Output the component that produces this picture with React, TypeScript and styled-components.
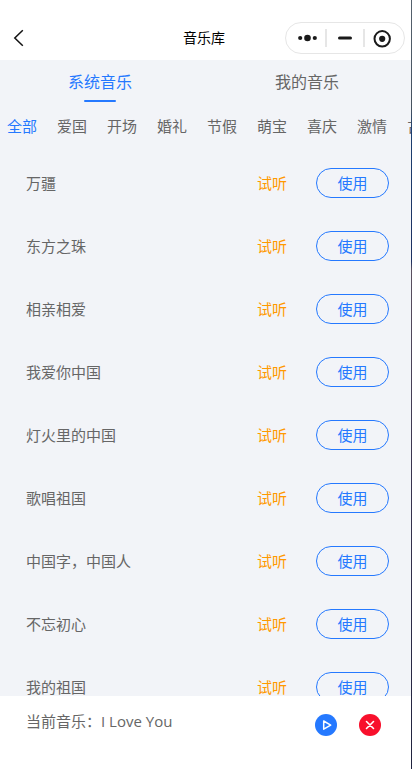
import React, { useState } from "react";
import styled, { createGlobalStyle } from "styled-components";

const GlobalStyle = createGlobalStyle`
  * { box-sizing: border-box; }
  body { margin: 0; background: #f2f4f8; }
  button { font: inherit; color: inherit; background: none; border: 0; padding: 0; cursor: pointer; }
`;

const BLUE = "#2579ff";

const Window = styled.div`
  display: grid;
  grid-template-columns: minmax(0, 1fr) 1px;
  height: 100vh;
  font-family: "Open Sans", "Noto Sans CJK SC", sans-serif;
  font-size: 15px;
  line-height: 20px;
  color: #666;
`;

const WindowEdge = styled.div`
  background: linear-gradient(#56626e 0%, #46525f 14%, #1c3f70 17%, #1c3060 34%, #5a5060 35%, #3a3550 60%, #20233f 100%);
`;

const Page = styled.main`
  display: flex;
  flex-direction: column;
  min-height: 0;
  background: #f2f4f8;
`;

const Header = styled.header`
  display: grid;
  grid-template-columns: 1fr auto 1fr;
  align-items: center;
  height: 60px;
  padding: 16px 6px 0 3px;
  background: #fff;
`;

const BackButton = styled.button`
  display: flex;
  justify-self: start;
  padding-left: 10px;
`;

const Title = styled.h1`
  margin: 0;
  font-size: 14px;
  font-weight: 400;
  line-height: 20px;
  color: #000;
`;

const Capsule = styled.div`
  display: flex;
  justify-self: end;
  align-items: center;
  justify-content: center;
  width: 120px;
  height: 32px;
  border: 1px solid #e6e6e6;
  border-radius: 16px;
`;

const CapsuleButton = styled.button`
  display: flex;
  flex: none;
  align-items: center;
  justify-content: center;
  width: 36px;
  height: 18px;

  & + & {
    width: 38px;
    border-left: 2px solid #e6e6e6;
  }
`;

const Tabs = styled.div`
  display: flex;
  justify-content: space-between;
  height: 44px;
  padding: 12px 72px 0 68px;
`;

const Tab = styled.button<{ $active: boolean }>`
  display: flex;
  flex-direction: column;
  align-items: center;
  gap: 8px;
  height: 30px;
  font-size: 16px;
  line-height: 20px;
  color: ${(p) => (p.$active ? BLUE : "#666")};

  &::after {
    content: "";
    width: 32px;
    height: 2px;
    border-radius: 1px;
    background: ${(p) => (p.$active ? BLUE : "transparent")};
  }
`;

const Categories = styled.nav`
  display: flex;
  flex: none;
  gap: 20px;
  height: 47px;
  padding: 12px 0 0 7px;
  overflow: hidden;
`;

const Category = styled.button<{ $active: boolean }>`
  flex: none;
  height: 20px;
  color: ${(p) => (p.$active ? BLUE : "#666")};
`;

const SongList = styled.ul`
  flex: 1;
  min-height: 0;
  margin: 0;
  padding: 0;
  list-style: none;
  overflow: hidden;
`;

const SongRow = styled.li`
  display: flex;
  align-items: center;
  height: 63px;
  padding: 0 22px 0 26px;
`;

const SongName = styled.span`
  flex: 1;
`;

const ListenButton = styled.button`
  margin-right: 29px;
  color: #ff9900;
`;

const UseButton = styled.button`
  width: 73px;
  height: 30px;
  border: 1px solid ${BLUE};
  border-radius: 15px;
  color: ${BLUE};
`;

const Player = styled.footer`
  display: flex;
  align-items: flex-start;
  gap: 22px;
  height: 73px;
  padding: 15px 30px 0 26px;
  background: #fff;
`;

const NowPlaying = styled.span`
  flex: 1;
`;

const PlayerButton = styled.button`
  display: flex;
  margin-top: 3px;
`;

const tabs = ["系统音乐", "我的音乐"];
const categories = ["全部", "爱国", "开场", "婚礼", "节假", "萌宝", "喜庆", "激情", "古风"];
const songs = [
  "万疆",
  "东方之珠",
  "相亲相爱",
  "我爱你中国",
  "灯火里的中国",
  "歌唱祖国",
  "中国字，中国人",
  "不忘初心",
  "我的祖国",
];

export default function App() {
  const [tab, setTab] = useState(tabs[0]);
  const [category, setCategory] = useState(categories[0]);

  return (
    <Window lang="zh-CN">
      <GlobalStyle />
      <Page>
        <Header>
          <BackButton aria-label="返回">
            <svg width="12" height="18" viewBox="0 0 12 18" fill="none" stroke="#111" strokeWidth="1.5">
              <path d="M9.8 1.2 1.8 9l8 7.8" />
            </svg>
          </BackButton>
          <Title>音乐库</Title>
          <Capsule>
            <CapsuleButton aria-label="更多">
              <svg width="20" height="8" viewBox="0 0 20 8" fill="#1a1a1a">
                <circle cx="3.2" cy="4" r="2.1" />
                <circle cx="10.5" cy="4" r="3.3" />
                <circle cx="17.8" cy="4" r="2.1" />
              </svg>
            </CapsuleButton>
            <CapsuleButton aria-label="最小化">
              <svg width="14" height="4" viewBox="0 0 14 4">
                <rect y="0.5" width="14" height="3" rx="1.5" fill="#1a1a1a" />
              </svg>
            </CapsuleButton>
            <CapsuleButton aria-label="关闭">
              <svg width="20" height="20" viewBox="0 0 20 20">
                <circle cx="9.2" cy="10.8" r="7.7" fill="none" stroke="#1a1a1a" strokeWidth="2" />
                <circle cx="9.2" cy="10.8" r="3.1" fill="#1a1a1a" />
              </svg>
            </CapsuleButton>
          </Capsule>
        </Header>
        <Tabs role="tablist">
          {tabs.map((name) => (
            <Tab key={name} role="tab" aria-selected={name === tab} $active={name === tab} onClick={() => setTab(name)}>
              {name}
            </Tab>
          ))}
        </Tabs>
        <Categories>
          {categories.map((name) => (
            <Category key={name} $active={name === category} onClick={() => setCategory(name)}>
              {name}
            </Category>
          ))}
        </Categories>
        <SongList>
          {songs.map((name) => (
            <SongRow key={name}>
              <SongName>{name}</SongName>
              <ListenButton>试听</ListenButton>
              <UseButton>使用</UseButton>
            </SongRow>
          ))}
        </SongList>
        <Player>
          <NowPlaying>当前音乐：I Love You</NowPlaying>
          <PlayerButton aria-label="播放">
            <svg width="22" height="22" viewBox="0 0 22 22">
              <circle cx="11" cy="11" r="11" fill={BLUE} />
              <path d="M8.7 7v8.2l7-4.1z" fill="none" stroke="#fff" strokeWidth="1.5" strokeLinejoin="round" />
            </svg>
          </PlayerButton>
          <PlayerButton aria-label="移除">
            <svg width="22" height="22" viewBox="0 0 22 22">
              <circle cx="11" cy="11" r="11" fill="#f8102c" />
              <path d="m7.5 7.5 7 7m0-7-7 7" stroke="#fff" strokeWidth="1.6" strokeLinecap="round" />
            </svg>
          </PlayerButton>
        </Player>
      </Page>
      <WindowEdge />
    </Window>
  );
}
